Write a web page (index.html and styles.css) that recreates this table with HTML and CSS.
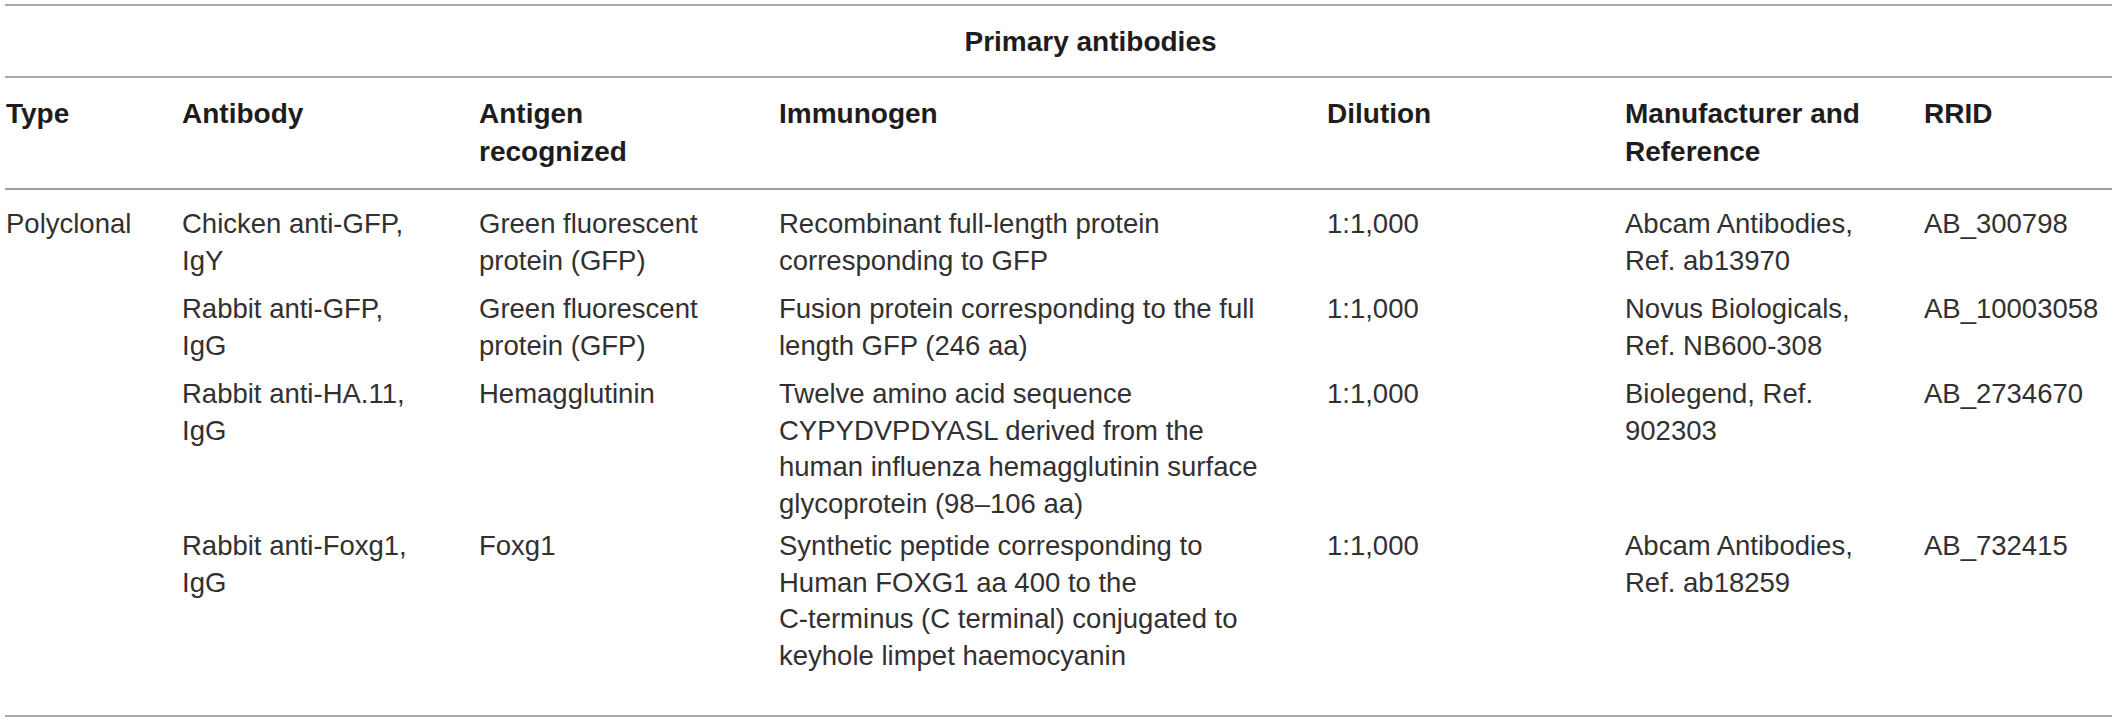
FILE: index.html
```html
<!DOCTYPE html>
<html>
<head>
<meta charset="utf-8">
<link rel="stylesheet" href="styles.css">
</head>
<body>
<table class="tbl">
  <colgroup>
    <col class="c1"><col class="c2"><col class="c3"><col class="c4"><col class="c5"><col class="c6"><col class="c7">
  </colgroup>
  <thead>
    <tr class="title-row"><th colspan="7" class="title">Primary antibodies</th></tr>
    <tr class="head-row">
      <th>Type</th>
      <th>Antibody</th>
      <th>Antigen<br>recognized</th>
      <th>Immunogen</th>
      <th>Dilution</th>
      <th>Manufacturer and<br>Reference</th>
      <th>RRID</th>
    </tr>
  </thead>
  <tbody>
    <tr class="first">
      <td>Polyclonal</td>
      <td>Chicken anti-GFP,<br>IgY</td>
      <td>Green fluorescent<br>protein (GFP)</td>
      <td>Recombinant full-length protein<br>corresponding to GFP</td>
      <td>1:1,000</td>
      <td>Abcam Antibodies,<br>Ref. ab13970</td>
      <td>AB_300798</td>
    </tr>
    <tr>
      <td></td>
      <td>Rabbit anti-GFP,<br>IgG</td>
      <td>Green fluorescent<br>protein (GFP)</td>
      <td>Fusion protein corresponding to the full<br>length GFP (246 aa)</td>
      <td>1:1,000</td>
      <td>Novus Biologicals,<br>Ref. NB600-308</td>
      <td>AB_10003058</td>
    </tr>
    <tr>
      <td></td>
      <td>Rabbit anti-HA.11,<br>IgG</td>
      <td>Hemagglutinin</td>
      <td>Twelve amino acid sequence<br>CYPYDVPDYASL derived from the<br>human influenza hemagglutinin surface<br>glycoprotein (98–106 aa)</td>
      <td>1:1,000</td>
      <td>Biolegend, Ref.<br>902303</td>
      <td>AB_2734670</td>
    </tr>
    <tr class="last">
      <td></td>
      <td>Rabbit anti-Foxg1,<br>IgG</td>
      <td>Foxg1</td>
      <td>Synthetic peptide corresponding to<br>Human FOXG1 aa 400 to the<br>C-terminus (C terminal) conjugated to<br>keyhole limpet haemocyanin</td>
      <td>1:1,000</td>
      <td>Abcam Antibodies,<br>Ref. ab18259</td>
      <td>AB_732415</td>
    </tr>
  </tbody>
</table>
</body>
</html>
```

FILE: styles.css
```css
html, body {
  background: #ffffff;
}
body {
  margin: 4px 5px 0 5px;
  font-family: "Liberation Sans", Arial, Helvetica, sans-serif;
  color: #262424;
}
.tbl {
  width: 2107px;
  table-layout: fixed;
  border-collapse: collapse;
  border-top: 2px solid #ababab;
  border-bottom: 2px solid #ababab;
}
.c1 { width: 176px; }
.c2 { width: 297px; }
.c3 { width: 300px; }
.c4 { width: 548px; }
.c5 { width: 298px; }
.c6 { width: 299px; }
.c7 { width: 189px; }

.tbl th, .tbl td {
  text-align: left;
  vertical-align: top;
  padding: 0 6px 0 1px;
}
.tbl th {
  font-size: 28px;
  font-weight: bold;
  line-height: 38px;
  color: #1e1c1c;
}
.title-row th.title {
  text-align: center;
  padding: 17px 0 15px 64px;
  border-bottom: 2px solid #ababab;
}
.head-row th {
  padding-top: 17px;
  padding-bottom: 17px;
  border-bottom: 2px solid #9f9f9f;
}
.tbl td {
  font-size: 27.5px;
  font-weight: normal;
  line-height: 36.5px;
  padding-top: 7px;
  padding-bottom: 5px;
  color: #333030;
}
.tbl tr.first td {
  padding-top: 16px;
}
.tbl tr.last td {
  padding-top: 1px;
  padding-bottom: 41px;
}
```
